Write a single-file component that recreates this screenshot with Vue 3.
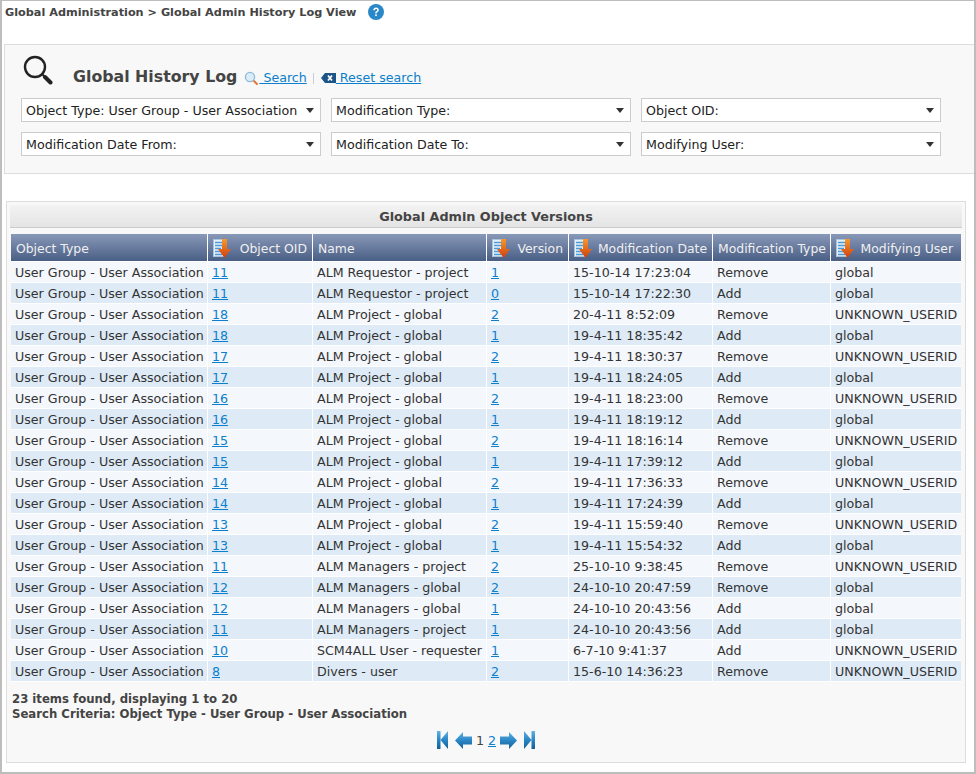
<script setup>
const columns = [
  { label: 'Object Type', width: 197, sort: false },
  { label: 'Object OID', width: 105, sort: true },
  { label: 'Name', width: 174, sort: false },
  { label: 'Version', width: 82, sort: true },
  { label: 'Modification Date', width: 144, sort: true },
  { label: 'Modification Type', width: 118, sort: false },
  { label: 'Modifying User', width: 130, sort: true },
]

const filters = [
  'Object Type: User Group - User Association',
  'Modification Type:',
  'Object OID:',
  'Modification Date From:',
  'Modification Date To:',
  'Modifying User:',
]

const rows = [
  ['11', 'ALM Requestor - project', '1', '15-10-14 17:23:04', 'Remove', 'global'],
  ['11', 'ALM Requestor - project', '0', '15-10-14 17:22:30', 'Add', 'global'],
  ['18', 'ALM Project - global', '2', '20-4-11 8:52:09', 'Remove', 'UNKNOWN_USERID'],
  ['18', 'ALM Project - global', '1', '19-4-11 18:35:42', 'Add', 'global'],
  ['17', 'ALM Project - global', '2', '19-4-11 18:30:37', 'Remove', 'UNKNOWN_USERID'],
  ['17', 'ALM Project - global', '1', '19-4-11 18:24:05', 'Add', 'global'],
  ['16', 'ALM Project - global', '2', '19-4-11 18:23:00', 'Remove', 'UNKNOWN_USERID'],
  ['16', 'ALM Project - global', '1', '19-4-11 18:19:12', 'Add', 'global'],
  ['15', 'ALM Project - global', '2', '19-4-11 18:16:14', 'Remove', 'UNKNOWN_USERID'],
  ['15', 'ALM Project - global', '1', '19-4-11 17:39:12', 'Add', 'global'],
  ['14', 'ALM Project - global', '2', '19-4-11 17:36:33', 'Remove', 'UNKNOWN_USERID'],
  ['14', 'ALM Project - global', '1', '19-4-11 17:24:39', 'Add', 'global'],
  ['13', 'ALM Project - global', '2', '19-4-11 15:59:40', 'Remove', 'UNKNOWN_USERID'],
  ['13', 'ALM Project - global', '1', '19-4-11 15:54:32', 'Add', 'global'],
  ['11', 'ALM Managers - project', '2', '25-10-10 9:38:45', 'Remove', 'UNKNOWN_USERID'],
  ['12', 'ALM Managers - global', '2', '24-10-10 20:47:59', 'Remove', 'global'],
  ['12', 'ALM Managers - global', '1', '24-10-10 20:43:56', 'Add', 'global'],
  ['11', 'ALM Managers - project', '1', '24-10-10 20:43:56', 'Add', 'global'],
  ['10', 'SCM4ALL User - requester', '1', '6-7-10 9:41:37', 'Add', 'UNKNOWN_USERID'],
  ['8', 'Divers - user', '2', '15-6-10 14:36:23', 'Remove', 'UNKNOWN_USERID'],
]
</script>

<template>
  <div class="page">
    <svg width="0" height="0" class="defs">
      <defs>
        <linearGradient id="navBlue" x1="0" y1="0" x2="0" y2="1">
          <stop offset="0" stop-color="#5fb2e4" />
          <stop offset="0.5" stop-color="#2a86c4" />
          <stop offset="1" stop-color="#145f96" />
        </linearGradient>
        <linearGradient id="sortArrow" x1="0" y1="0" x2="0" y2="1">
          <stop offset="0" stop-color="#f59a2c" />
          <stop offset="1" stop-color="#d23c0c" />
        </linearGradient>
      </defs>
    </svg>

    <div class="breadcrumb">
      <span>Global Administration &gt; Global Admin History Log View</span>
      <svg class="help" width="16" height="16" viewBox="0 0 16 16">
        <circle cx="8" cy="8" r="8" fill="#2b88c8" />
        <path d="M5.300 6.200C5.400 4.600 6.500 3.600 8.100 3.600c1.600 0 2.700 1 2.700 2.300 0 1.100-.6 1.600-1.300 2.100-.6.400-.8.700-.8 1.400H7.200c0-1.100.3-1.700 1.100-2.200.6-.4.900-.7.900-1.200 0-.6-.4-1-1.100-1-.7 0-1.100.4-1.200 1.200H5.300z" fill="#fff" />
        <rect x="7.200" y="10.400" width="1.600" height="1.700" fill="#fff" />
      </svg>
    </div>

    <section class="search-panel">
      <div class="search-head">
        <svg class="big-glass" width="30" height="30" viewBox="0 0 30 30">
          <circle cx="12" cy="12" r="10" fill="none" stroke="#222" stroke-width="2.400" />
          <path d="M19 19l3 3" stroke="#222" stroke-width="2" />
          <path d="M22 22l5.500 5.500" stroke="#222" stroke-width="4" stroke-linecap="round" />
        </svg>
        <h1>Global History Log</h1>
        <a class="tool-link">
          <svg width="15" height="15" viewBox="0 0 15 15">
            <circle cx="6" cy="6" r="4.600" fill="#d9ecf8" stroke="#8fb9d8" stroke-width="1.300" />
            <path d="M9.600 9.600l4 4" stroke="#e8702a" stroke-width="2" />
          </svg>
          <span class="link-text">&nbsp;Search</span>
        </a>
        <span class="sep"></span>
        <a class="tool-link">
          <svg width="15" height="10" viewBox="0 0 15 10">
            <path d="M4 0h11v10H4L0 5z" fill="#1d5488" />
            <path d="M7 2.500l4 5M11 2.500l-4 5" stroke="#fff" stroke-width="1.700" />
          </svg>
          <span class="link-text">&nbsp;Reset search</span>
        </a>
      </div>
      <div class="filters">
        <div v-for="f in filters" :key="f" class="filter">
          <span>{{ f }}</span>
          <i class="caret"></i>
        </div>
      </div>
    </section>

    <section class="table-panel">
      <div class="panel-title">Global Admin Object Versions</div>
      <table>
        <colgroup>
          <col v-for="c in columns" :key="c.label" :style="{ width: c.width + 'px' }" />
        </colgroup>
        <thead>
          <tr>
            <th v-for="c in columns" :key="c.label">
              <div class="th-inner" :class="{ sorted: c.sort }">
                <svg v-if="c.sort" width="18" height="19" viewBox="0 0 18 19">
                  <rect x="0.500" y="0.500" width="11" height="17" fill="#e6f0f8" stroke="#a8c4dc" />
                  <path d="M2 3.500h8M2 6.500h7M2 9.500h6M2 12.500h6M2 15.500h7" stroke="#4d9ad6" stroke-width="1.600" />
                  <path d="M9 0h5v10h4l-6.500 9L5 10h4z" fill="url(#sortArrow)" />
                </svg>
                <span>{{ c.label }}</span>
              </div>
            </th>
          </tr>
        </thead>
        <tbody>
          <tr v-for="(r, i) in rows" :key="i">
            <td>User Group - User Association</td>
            <td><a>{{ r[0] }}</a></td>
            <td>{{ r[1] }}</td>
            <td><a>{{ r[2] }}</a></td>
            <td>{{ r[3] }}</td>
            <td>{{ r[4] }}</td>
            <td>{{ r[5] }}</td>
          </tr>
        </tbody>
      </table>

      <p class="summary">
        23 items found, displaying 1 to 20<br />
        Search Criteria: Object Type - User Group - User Association
      </p>

      <div class="pager">
        <svg class="nav-end" width="11" height="18" viewBox="0 0 11 18"><path d="M0 0h3.500v18H0zM11 0v18L3.500 9z" fill="url(#navBlue)" /></svg>
        <svg width="17" height="17" viewBox="0 0 17 17"><path d="M8 0v4.500h9v8H8V17L0 8.500z" fill="url(#navBlue)" /></svg>
        <span class="page-num">1</span>
        <a>2</a>
        <svg width="17" height="17" viewBox="0 0 17 17"><path d="M9 0v4.500H0v8h9V17l8-8.500z" fill="url(#navBlue)" /></svg>
        <svg class="nav-end" width="11" height="18" viewBox="0 0 11 18"><path d="M11 0H7.500v18H11zM0 0v18l7.500-9z" fill="url(#navBlue)" /></svg>
      </div>
    </section>
  </div>
</template>

<style>
html, body {
  margin: 0;
  background: #fff;
}
</style>

<style scoped>
.page {
  box-sizing: border-box;
  width: 976px;
  height: 774px;
  border: 1px solid #bdbdbd;
  border-width: 1px 2px 2px 2px;
  font-family: "DejaVu Sans", Verdana, sans-serif;
  font-size: 12.650px;
  color: #333;
  overflow: hidden;
}

.defs {
  position: absolute;
}

.breadcrumb {
  height: 43px;
  padding: 4px 0 0 3px;
  box-sizing: border-box;
  display: flex;
  align-items: flex-start;
  gap: 11px;
  font-size: 11.250px;
  font-weight: bold;
  color: #444;
  line-height: 15px;
}

.help {
  margin-top: -1px;
}

.search-panel {
  height: 130px;
  box-sizing: border-box;
  margin-left: 2px;
  margin-right: -2px;
  padding: 10px 0 0 16px;
  background: #f8f8f8;
  border: 1px solid #ddd;
  border-right: 0;
}

.search-head {
  display: flex;
  align-items: flex-end;
  height: 33px;
  margin-bottom: 10px;
}

.big-glass {
  margin: 0 20px 3px 2px;
}

h1 {
  margin: 0 7px 0 0;
  font-size: 15.800px;
  line-height: 22px;
  color: #444;
}

.tool-link {
  display: flex;
  align-items: center;
  color: #0d7fcc;
  line-height: 18px;
  margin-bottom: 1px;
  text-decoration: underline;
}

.sep {
  width: 1px;
  height: 11px;
  background: #ccc;
  margin: 0 7px 4px 6px;
}

.filters {
  display: grid;
  grid-template-columns: repeat(3, 300px);
  gap: 10px;
}

.filter {
  box-sizing: border-box;
  height: 24px;
  padding: 0 6px 0 4px;
  background: #fff;
  border: 1px solid #ccc;
  display: flex;
  align-items: center;
  justify-content: space-between;
  color: #222;
  white-space: nowrap;
}

.caret {
  width: 0;
  height: 0;
  border-left: 4.500px solid transparent;
  border-right: 4.500px solid transparent;
  border-top: 5px solid #333;
}

.table-panel {
  margin: 27px 0 0 4px;
  width: 960px;
  height: 562px;
  box-sizing: border-box;
  padding: 3px 3px 0;
  background: #f8f8f8;
  border: 1px solid #ddd;
}

.panel-title {
  height: 23px;
  box-sizing: border-box;
  background: linear-gradient(#f3f3f3, #e4e4e4);
  border-bottom: 1px solid #ccc;
  text-align: center;
  font-size: 12.800px;
  font-weight: bold;
  line-height: 24px;
  color: #444;
}

table {
  table-layout: fixed;
  border-collapse: separate;
  border-spacing: 0;
  width: 950px;
  margin: 6px 0 0 1px;
}

th {
  height: 27px;
  padding: 0;
  background: linear-gradient(#8898b8, #4a5f85);
  background-clip: padding-box;
  border-right: 1px solid #fff;
  border-bottom: 1px solid #fff;
  color: #f0f0f0;
  font-size: 12.400px;
  font-weight: normal;
  text-align: left;
  white-space: nowrap;
}

.th-inner {
  display: flex;
  align-items: center;
  padding: 1px 5px 0;
}

.th-inner.sorted {
  justify-content: space-between;
}

th:last-child .th-inner {
  padding-right: 8px;
}

th:last-child,
td:last-child {
  border-right: 0;
}

td {
  height: 18px;
  box-sizing: content-box;
  padding: 2px 4px 0;
  line-height: 18px;
  background: #f4f7fc;
  border-right: 1px solid #fff;
  border-bottom: 1px solid #fff;
  white-space: nowrap;
  overflow: hidden;
}

tbody tr:nth-child(even) td {
  background: #deebf7;
}

td a,
.pager a {
  color: #0d7fcc;
  text-decoration: underline;
}

.summary {
  margin: 10px 0 0 2px;
  font-size: 11.700px;
  font-weight: bold;
  line-height: 15px;
  color: #444;
}

.pager {
  display: flex;
  justify-content: center;
  align-items: center;
  gap: 4px;
  margin-top: 8px;
  height: 20px;
}

.nav-end:first-child {
  margin-right: 3px;
}

.nav-end:last-child {
  margin-left: 3px;
}

.page-num {
  color: #444;
}
</style>
